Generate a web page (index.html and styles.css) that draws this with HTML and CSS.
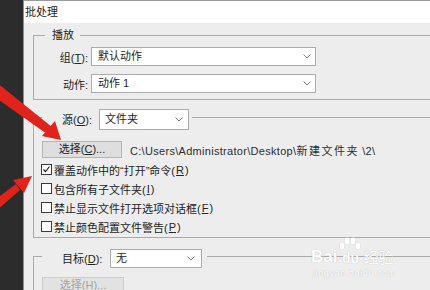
FILE: index.html
```html
<!DOCTYPE html>
<html lang="zh-CN">
<head>
  <meta charset="UTF-8">
  <title>批处理</title>
  <link rel="stylesheet" href="styles.css">
</head>
<body>
  <div class="screen">
    <div class="desk"></div>

    <div class="dialog">
      <div class="titlebar">批处理</div>

      <div class="panel">
        <fieldset class="group play">
          <legend>播放</legend>
          <div class="form-grid">
            <label>组(<u>T</u>):</label>
            <div class="combo">默认动作<svg class="chev" width="8" height="5" viewBox="0 0 8 5"><polyline points="0.5,0.5 4,4 7.5,0.5" /></svg></div>
            <label>动作:</label>
            <div class="combo">动作 1<svg class="chev" width="8" height="5" viewBox="0 0 8 5"><polyline points="0.5,0.5 4,4 7.5,0.5" /></svg></div>
          </div>
        </fieldset>

        <fieldset class="group source">
          <legend>
            <div class="legend-row">
              <label class="src-label">源(<u>O</u>):</label>
              <div class="combo short">文件夹<svg class="chev" width="8" height="5" viewBox="0 0 8 5"><polyline points="0.5,0.5 4,4 7.5,0.5" /></svg></div>
            </div>
          </legend>
          <div class="pick-row">
            <button class="btn">选择(<u>C</u>)...</button>
            <span class="path">C:\Users\Administrator\Desktop\<span class="cjk">新建文件夹</span> \2\</span>
          </div>
          <div class="checks">
            <div class="check-row"><span class="box"><svg width="9" height="9" viewBox="0 0 9 9"><polyline points="1.5,4.5 3.5,6.5 7.5,1.5" /></svg></span>覆盖动作中的“打开”命令(<u>R</u>)</div>
            <div class="check-row"><span class="box"></span>包含所有子文件夹(<u>I</u>)</div>
            <div class="check-row"><span class="box"></span>禁止显示文件打开选项对话框(<u>F</u>)</div>
            <div class="check-row"><span class="box"></span>禁止颜色配置文件警告(<u>P</u>)</div>
          </div>
        </fieldset>

        <fieldset class="group target">
          <legend>
            <div class="legend-row">
              <label class="dst-label">目标(<u>D</u>):</label>
              <div class="combo target-combo">无<svg class="chev" width="8" height="5" viewBox="0 0 8 5"><polyline points="0.5,0.5 4,4 7.5,0.5" /></svg></div>
            </div>
          </legend>
          <button class="btn btn-off" disabled>选择(<u>H</u>)...</button>
        </fieldset>
      </div>
    </div>

    <!-- red annotation arrows drawn over the screenshot -->
    <svg class="arrows" width="80" height="215" viewBox="0 0 80 215">
      <polygon points="-4,82 -4,98 47,134 52,127" fill="#e0231b" />
      <polygon points="61,140 42,136 55,121" fill="#e0231b" />
      <polygon points="-4,199 -4,211 20,190 16,184" fill="#e0231b" />
      <polygon points="32,176 24,193 13,180" fill="#e0231b" />
    </svg>

    <div class="watermark">
      <div class="wm-logo">
        <span class="wm-bai">Bai</span>
        <span class="wm-paw">
          <svg width="26" height="13" viewBox="0 0 26 13">
            <ellipse cx="5" cy="9" rx="2.6" ry="3.2" />
            <ellipse cx="10" cy="4" rx="2.6" ry="3.4" />
            <ellipse cx="16" cy="4" rx="2.6" ry="3.4" />
            <ellipse cx="21" cy="9" rx="2.6" ry="3.2" />
          </svg>
          <span class="wm-du">du</span>
        </span>
        <span class="wm-jy">经验</span>
      </div>
      <div class="wm-url">jingyan.baidu.com</div>
    </div>
  </div>
</body>
</html>
```

FILE: styles.css
```css
html, body {
  margin: 0;
}
body {
  width: 430px;
  height: 290px;
  overflow: hidden;
  background: #2c2c2c;
  font-family: "Liberation Sans", "Noto Sans CJK SC", sans-serif;
  font-size: 11px;
  color: #242424;
}
.screen {
  position: relative;
  display: flex;
  height: 290px;
}
.desk {
  width: 23px;
  flex: none;
  background: #2c2c2c;
}
.dialog {
  flex: 1;
  min-width: 0;
  background: #ededed;
  border-left: 1px solid #8c8c8c;
  display: flex;
  flex-direction: column;
}
.titlebar {
  height: 22px;
  line-height: 22px;
  padding-left: 1px;
  background: #fff;
  border-top: 1px solid #9a9a9a;
}
.panel {
  padding: 4px 0 0 9px;
}

/* group boxes */
.group {
  margin: 0 -12px 0 0;
  padding: 0;
  border: 1px solid #aaaaaa;
  min-width: 0;
}
.group legend {
  padding: 0;
  line-height: 16px;
}
.play legend {
  margin-left: 11px;
  padding: 0 6px 0 7px;
}
.play {
  padding: 4px 0 6px;
}
.form-grid {
  display: grid;
  grid-template-columns: 54px 225px;
  column-gap: 3px;
  row-gap: 8px;
  align-items: center;
}
.form-grid label {
  text-align: right;
}

.combo {
  box-sizing: border-box;
  height: 19px;
  border: 1px solid #acacac;
  background: #fff;
  display: flex;
  align-items: center;
  justify-content: space-between;
  padding: 0 4px 0 6px;
  line-height: 17px;
}
.chev polyline {
  fill: none;
  stroke: #7a7a7a;
  stroke-width: 1;
}

.source {
  margin-top: 4px;
  padding: 11px 0 1px;
}
.source legend,
.target legend {
  margin-left: 8px;
  padding: 5px 3px 0 20px;
}
.target legend {
  padding-right: 5px;
}
.legend-row {
  display: flex;
  align-items: center;
  gap: 2px;
}
.src-label {
  width: 35px;
}
.dst-label {
  width: 46px;
}
.combo.short {
  width: 90px;
  height: 21px;
  padding-left: 5px;
  padding-right: 5px;
}
.combo.target-combo {
  width: 92px;
  padding-left: 5px;
  padding-right: 6px;
}

.pick-row {
  display: flex;
  align-items: center;
  gap: 8px;
  padding-left: 8px;
}
.btn {
  box-sizing: border-box;
  width: 80px;
  height: 17px;
  padding: 0;
  margin: 0;
  border: 1px solid #b4b4b4;
  background: #dedede;
  font: inherit;
  color: inherit;
  line-height: 15px;
}
.btn-off {
  width: 82px;
  margin-left: 8px;
  color: #a3a3a3;
  background: #e2e2e2;
  border-color: #cdcdcd;
}
.path {
  color: #2e2e2e;
  letter-spacing: 0.3px;
  white-space: nowrap;
}
.path .cjk {
  letter-spacing: 1.5px;
}

.checks {
  margin-top: 2px;
  padding-left: 7px;
}
.check-row {
  display: flex;
  align-items: center;
  height: 19px;
  gap: 1px;
}
.box {
  box-sizing: border-box;
  width: 11px;
  height: 11px;
  border: 1px solid #3a3a3a;
  background: #fff;
  display: flex;
  align-items: center;
  justify-content: center;
  margin-right: 1px;
}
.box polyline {
  fill: none;
  stroke: #222;
  stroke-width: 1.2;
}

.target {
  margin-top: 6px;
  padding: 9px 0 0;
}

/* overlays */
.arrows {
  position: absolute;
  left: 0;
  top: 0;
}
.watermark {
  position: absolute;
  left: 311px;
  top: 236px;
  color: #fff;
  text-shadow: 0 0 1px rgba(110, 110, 110, 0.45);
}
.wm-logo {
  display: flex;
  align-items: flex-end;
  height: 30px;
}
.wm-bai {
  font-family: "Liberation Sans", sans-serif;
  font-weight: bold;
  font-size: 17px;
  line-height: 18px;
}
.wm-paw {
  display: flex;
  flex-direction: column;
  align-items: center;
  width: 26px;
}
.wm-paw svg {
  fill: #fff;
  filter: drop-shadow(0 0 0.6px rgba(110, 110, 110, 0.5));
}
.wm-du {
  font-family: "Liberation Sans", sans-serif;
  font-weight: bold;
  font-size: 14px;
  line-height: 16px;
}
.wm-jy {
  font-family: "Noto Sans CJK SC", sans-serif;
  font-size: 15px;
  line-height: 18px;
}
.wm-url {
  font-size: 9px;
  line-height: 14px;
  letter-spacing: 0.6px;
  padding-left: 2px;
}
```
